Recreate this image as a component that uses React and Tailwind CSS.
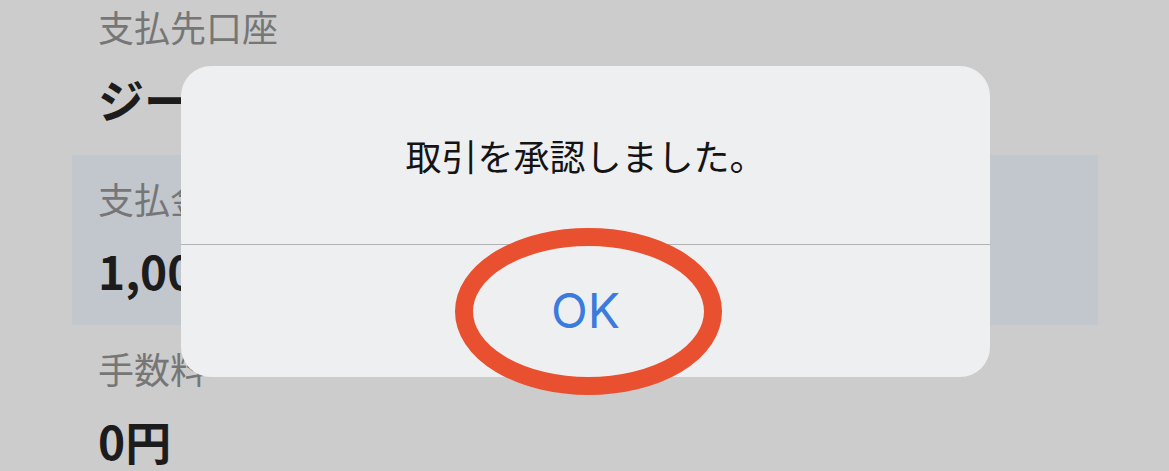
import React from 'react';

const jp = "font-['Noto_Sans_CJK_JP','Noto_Sans',sans-serif]";

function Field({ label, value, highlight, first, last }) {
  const size = first ? 'h-[155px] pt-[8px]' : last ? 'pt-[25px]' : 'h-[170px] pt-[25px]';
  return (
    <div className={`flex flex-col pl-[26px] ${size} ${highlight ? 'bg-[#c2c6cd]' : ''}`}>
      <div className={`${jp} text-[36px] leading-none text-[#767676] whitespace-nowrap`}>{label}</div>
      <div className={`${jp} mt-[31px] text-[46px] leading-none font-bold text-[#1c1c1c] whitespace-nowrap`}>
        {value}
      </div>
    </div>
  );
}

export default function App() {
  return (
    <div className="relative h-[471px] w-full overflow-hidden bg-[#cccccc]">
      {/* Background details list */}
      <div className="flex flex-col pl-[72px] pr-[71px]">
        <Field first label="支払先口座" value="ジーエムオーあおぞらネット銀行" />
        <Field highlight label="支払金額" value="1,000円" />
        <Field last label="手数料" value="0円" />
      </div>

      {/* Alert dialog */}
      <div className="absolute left-[181px] top-[66px] flex h-[311px] w-[809px] flex-col overflow-hidden rounded-[30px] bg-[#eeeff1]">
        <div className="flex h-[178px] items-center justify-center">
          <p className={`${jp} text-[36px] leading-none text-[#141414]`}>取引を承認しました。</p>
        </div>
        <div className="h-px bg-[#b2b2b6]" />
        <div className="flex flex-1 items-center justify-center">
          <span className="font-['Inter','Liberation_Sans',sans-serif] text-[48px] leading-none text-[#3a7bdd]">
            OK
          </span>
        </div>
      </div>

      {/* Red annotation ring */}
      <svg
        className="absolute left-[455px] top-[228px]"
        width="267"
        height="167"
        viewBox="0 0 267 167"
      >
        <ellipse cx="133.5" cy="83.5" rx="124.5" ry="74.5" fill="none" stroke="#e9502f" strokeWidth="18" />
      </svg>
    </div>
  );
}
